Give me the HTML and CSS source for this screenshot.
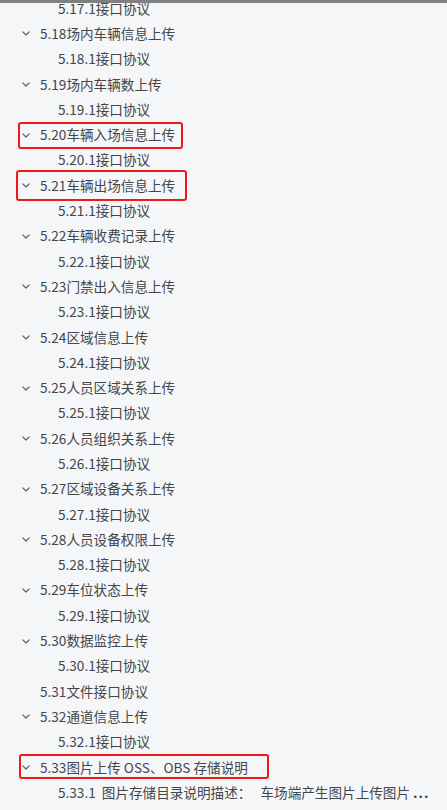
FILE: index.html
```html
<!DOCTYPE html>
<html lang="zh-CN">
<head>
<meta charset="utf-8">
<title>目录</title>
<link rel="stylesheet" href="styles.css">
</head>
<body>
<div class="topbar"></div>
<ul class="toc">
  <li class="row l2">5.17.1接口协议</li>
  <li class="row l1"><svg class="chev" viewBox="0 0 8 5"><polyline points="0.8,0.8 4,4 7.2,0.8"/></svg>5.18场内车辆信息上传</li>
  <li class="row l2">5.18.1接口协议</li>
  <li class="row l1"><svg class="chev" viewBox="0 0 8 5"><polyline points="0.8,0.8 4,4 7.2,0.8"/></svg>5.19场内车辆数上传</li>
  <li class="row l2">5.19.1接口协议</li>
  <li class="row l1"><span class="mark mark-a"></span><svg class="chev" viewBox="0 0 8 5"><polyline points="0.8,0.8 4,4 7.2,0.8"/></svg>5.20车辆入场信息上传</li>
  <li class="row l2">5.20.1接口协议</li>
  <li class="row l1"><span class="mark mark-b"></span><svg class="chev" viewBox="0 0 8 5"><polyline points="0.8,0.8 4,4 7.2,0.8"/></svg>5.21车辆出场信息上传</li>
  <li class="row l2">5.21.1接口协议</li>
  <li class="row l1"><svg class="chev" viewBox="0 0 8 5"><polyline points="0.8,0.8 4,4 7.2,0.8"/></svg>5.22车辆收费记录上传</li>
  <li class="row l2">5.22.1接口协议</li>
  <li class="row l1"><svg class="chev" viewBox="0 0 8 5"><polyline points="0.8,0.8 4,4 7.2,0.8"/></svg>5.23门禁出入信息上传</li>
  <li class="row l2">5.23.1接口协议</li>
  <li class="row l1"><svg class="chev" viewBox="0 0 8 5"><polyline points="0.8,0.8 4,4 7.2,0.8"/></svg>5.24区域信息上传</li>
  <li class="row l2">5.24.1接口协议</li>
  <li class="row l1"><svg class="chev" viewBox="0 0 8 5"><polyline points="0.8,0.8 4,4 7.2,0.8"/></svg>5.25人员区域关系上传</li>
  <li class="row l2">5.25.1接口协议</li>
  <li class="row l1"><svg class="chev" viewBox="0 0 8 5"><polyline points="0.8,0.8 4,4 7.2,0.8"/></svg>5.26人员组织关系上传</li>
  <li class="row l2">5.26.1接口协议</li>
  <li class="row l1"><svg class="chev" viewBox="0 0 8 5"><polyline points="0.8,0.8 4,4 7.2,0.8"/></svg>5.27区域设备关系上传</li>
  <li class="row l2">5.27.1接口协议</li>
  <li class="row l1"><svg class="chev" viewBox="0 0 8 5"><polyline points="0.8,0.8 4,4 7.2,0.8"/></svg>5.28人员设备权限上传</li>
  <li class="row l2">5.28.1接口协议</li>
  <li class="row l1"><svg class="chev" viewBox="0 0 8 5"><polyline points="0.8,0.8 4,4 7.2,0.8"/></svg>5.29车位状态上传</li>
  <li class="row l2">5.29.1接口协议</li>
  <li class="row l1"><svg class="chev" viewBox="0 0 8 5"><polyline points="0.8,0.8 4,4 7.2,0.8"/></svg>5.30数据监控上传</li>
  <li class="row l2">5.30.1接口协议</li>
  <li class="row l1 leaf">5.31文件接口协议</li>
  <li class="row l1"><svg class="chev" viewBox="0 0 8 5"><polyline points="0.8,0.8 4,4 7.2,0.8"/></svg>5.32通道信息上传</li>
  <li class="row l2">5.32.1接口协议</li>
  <li class="row l1"><span class="mark mark-c"></span><svg class="chev" viewBox="0 0 8 5"><polyline points="0.8,0.8 4,4 7.2,0.8"/></svg>5.33图片上传 OSS、OBS 存储说明</li>
  <li class="row l2"><span class="clip">5.33.1&nbsp;&nbsp;图片存储目录说明描述：&nbsp;&nbsp;&nbsp;车场端产生图片上传图片 <span class="dots">...</span></span></li>
</ul>
</body>
</html>
```

FILE: styles.css
```css
html, body {
  margin: 0;
  padding: 0;
  background: #f5f6f8;
}
body {
  font-family: "Noto Sans CJK SC", "Noto Sans", sans-serif;
  font-size: 13.6px;
  color: #43464b;
  overflow: hidden;
  height: 810px;
}
.topbar {
  position: fixed;
  top: 0;
  left: 0;
  right: 0;
  height: 3px;
  background: #808080;
  z-index: 5;
}
.toc {
  list-style: none;
  margin: -5px 0 0 0;
  padding: 0;
}
.row {
  position: relative;
  display: flex;
  align-items: center;
  height: 25.3px;
  white-space: nowrap;
}
.l1 {
  padding-left: 22px;
}
.l1.leaf {
  padding-left: 40px;
}
.l2 {
  padding-left: 58px;
}
.chev {
  width: 8px;
  height: 5px;
  margin-right: 10px;
  margin-top: 2px;
  flex: none;
}
.chev polyline {
  fill: none;
  stroke: #5c6066;
  stroke-width: 1.2;
  stroke-linecap: round;
  stroke-linejoin: round;
}
.clip {
  display: block;
  overflow: hidden;
  max-width: 385px;
}
.dots {
  letter-spacing: 1px;
  font-weight: 700;
}
.mark {
  position: absolute;
  border: 2px solid #f01818;
  border-radius: 3px;
  box-sizing: border-box;
  pointer-events: none;
}
.mark-a {
  left: 18px;
  top: 0.5px;
  width: 165px;
  height: 27px;
}
.mark-b {
  left: 16px;
  top: -2px;
  width: 171px;
  height: 31px;
}
.mark-c {
  left: 19px;
  top: 0;
  width: 250px;
  height: 25px;
}
```
